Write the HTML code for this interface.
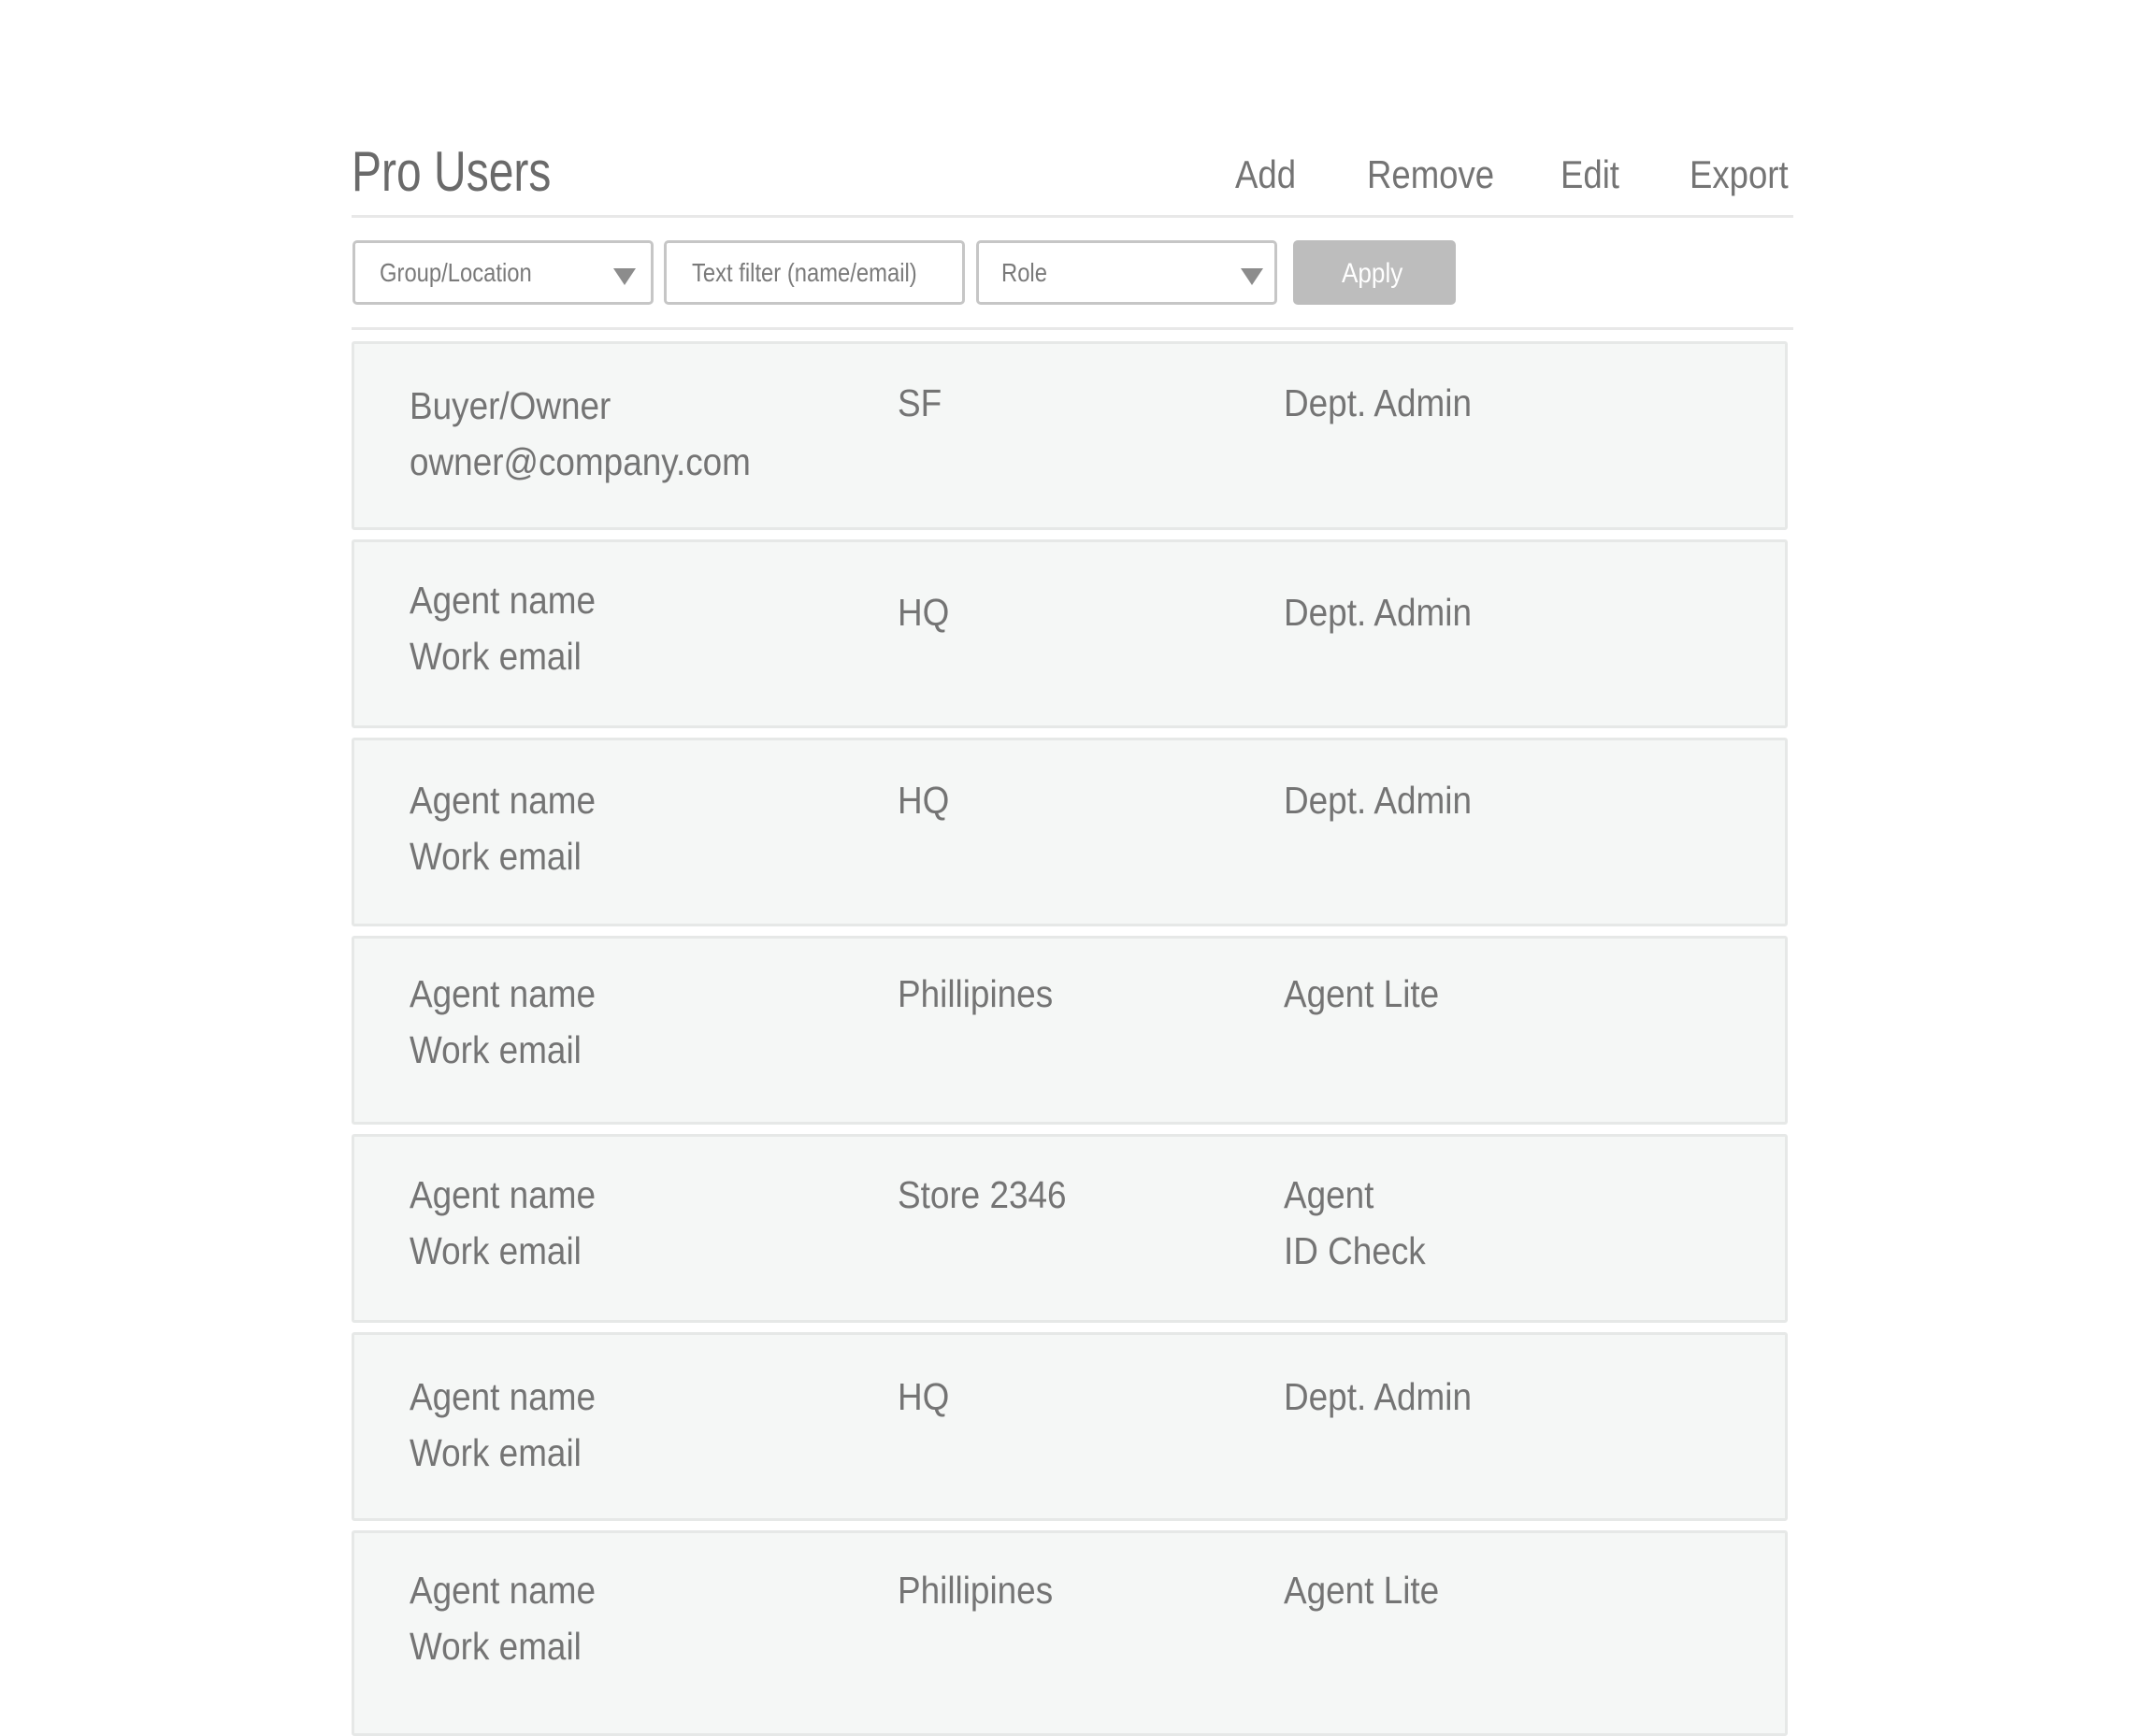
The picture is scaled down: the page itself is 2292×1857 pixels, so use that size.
<!DOCTYPE html>
<html><head><meta charset="utf-8"><style>
*{margin:0;padding:0;box-sizing:border-box}
body{width:2292px;height:1830px;background:#fff;position:relative;overflow:hidden;font-family:"Liberation Sans",sans-serif;color:#747474}
.t{position:absolute;white-space:nowrap;line-height:1;transform:scaleX(.87);transform-origin:left top}
.hr{position:absolute;left:376px;width:1542px;height:3px;background:#e8e8e8}
.box{position:absolute;top:257px;height:69px;border:3px solid #c6c6c6;border-radius:5px;background:#fff}
.tri{position:absolute;top:287px;width:0;height:0;border-left:12px solid transparent;border-right:12px solid transparent;border-top:18px solid #8c8c8c}
.row{position:absolute;left:376px;width:1536px;height:202px;background:#f5f7f6;border:3px solid #e6e8e7;border-radius:3px}
.b{font-size:41px;transform:scaleX(.9)}
.f{font-size:28px;color:#7a7a7a;transform:scaleX(.85)}
</style></head><body>
<div class="t" style="left:376px;top:154px;font-size:60px;color:#6a6a6a;transform:scaleX(.8)">Pro Users</div>
<div class="t" style="left:1321px;top:166px;font-size:42px">Add</div>
<div class="t" style="left:1462px;top:166px;font-size:42px">Remove</div>
<div class="t" style="left:1669px;top:166px;font-size:42px">Edit</div>
<div class="t" style="left:1807px;top:166px;font-size:42px">Export</div>
<div class="hr" style="top:230px"></div>

<div class="box" style="left:377px;width:322px"></div>
<div class="t f" style="left:406px;top:278px">Group/Location</div>
<div class="tri" style="left:656px"></div>
<div class="box" style="left:710px;width:322px"></div>
<div class="t f" style="left:740px;top:278px">Text filter (name/email)</div>
<div class="box" style="left:1044px;width:322px"></div>
<div class="t f" style="left:1071px;top:278px">Role</div>
<div class="tri" style="left:1327px"></div>
<div style="position:absolute;left:1383px;top:257px;width:174px;height:69px;background:#bdbdbd;border-radius:5px"></div>
<div class="t" style="left:1435px;top:278px;font-size:30px;color:#fff">Apply</div>
<div class="hr" style="top:350px"></div>

<div class="row" style="top:365px"></div>
<div class="row" style="top:577px"></div>
<div class="row" style="top:789px"></div>
<div class="row" style="top:1001px"></div>
<div class="row" style="top:1213px"></div>
<div class="row" style="top:1425px"></div>
<div class="row" style="top:1637px;height:220px"></div>

<div class="t b" style="left:438px;top:414px">Buyer/Owner</div>
<div class="t b" style="left:438px;top:474px">owner@company.com</div>
<div class="t b" style="left:960px;top:411px">SF</div>
<div class="t b" style="left:1373px;top:411px">Dept. Admin</div>

<div class="t b" style="left:438px;top:622px">Agent name</div>
<div class="t b" style="left:438px;top:682px">Work email</div>
<div class="t b" style="left:960px;top:635px">HQ</div>
<div class="t b" style="left:1373px;top:635px">Dept. Admin</div>

<div class="t b" style="left:438px;top:836px">Agent name</div>
<div class="t b" style="left:438px;top:896px">Work email</div>
<div class="t b" style="left:960px;top:836px">HQ</div>
<div class="t b" style="left:1373px;top:836px">Dept. Admin</div>

<div class="t b" style="left:438px;top:1043px">Agent name</div>
<div class="t b" style="left:438px;top:1103px">Work email</div>
<div class="t b" style="left:960px;top:1043px">Phillipines</div>
<div class="t b" style="left:1373px;top:1043px">Agent Lite</div>

<div class="t b" style="left:438px;top:1258px">Agent name</div>
<div class="t b" style="left:438px;top:1318px">Work email</div>
<div class="t b" style="left:960px;top:1258px">Store 2346</div>
<div class="t b" style="left:1373px;top:1258px">Agent</div>
<div class="t b" style="left:1373px;top:1318px">ID Check</div>

<div class="t b" style="left:438px;top:1474px">Agent name</div>
<div class="t b" style="left:438px;top:1534px">Work email</div>
<div class="t b" style="left:960px;top:1474px">HQ</div>
<div class="t b" style="left:1373px;top:1474px">Dept. Admin</div>

<div class="t b" style="left:438px;top:1681px">Agent name</div>
<div class="t b" style="left:438px;top:1741px">Work email</div>
<div class="t b" style="left:960px;top:1681px">Phillipines</div>
<div class="t b" style="left:1373px;top:1681px">Agent Lite</div>
</body></html>
